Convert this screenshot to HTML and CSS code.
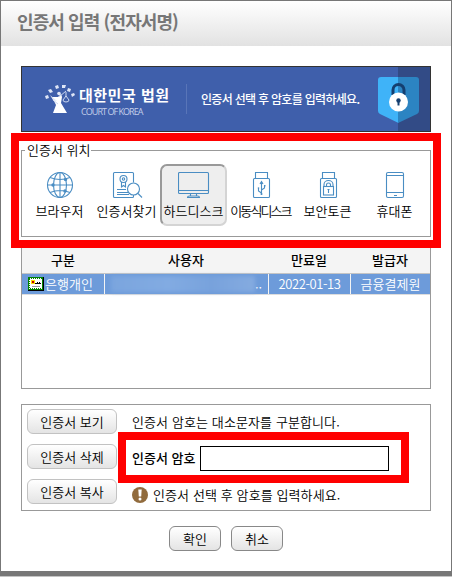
FILE: index.html
```html
<!DOCTYPE html>
<html lang="ko">
<head>
    <meta charset="UTF-8">
    <meta name="viewport" content="width=device-width, initial-scale=1.0">
    <title>인증서 입력 (전자서명)</title>
    <link rel="stylesheet" href="styles.css">
</head>
<body>
    <div class="dialog">
        <h1 class="titulo">인증서 입력 (전자서명)</h1>

        <div class="content">
            <div class="banner">
                <svg class="emblem" width="32" height="30" viewBox="0 0 32 30">
                    <g fill="#dfe6f6">
                        <path d="M1 12l3-1 1 3-3 1zM4 6l3-1 2 3-3 1zM11 2l3-1 1 3-3 1zM18 1l4 0-1 3-3 0zM24 4l3 1-1 3-3-1zM27 10l3-1 1 2-3 2z"/>
                        <path d="M8 13l6 0 3-3 1 3-1 6 6 10-14 0 3-8z" fill="#fff"/>
                        <path d="M6 11l3 5 4 1z"/>
                    </g>
                    <circle cx="15" cy="9.500" r="1.800" fill="#dfe6f6"/>
                    <path d="M15 13l7-6M22 8v5M19 16l3-4 3 4a3 2 0 0 1-6 0M9 16l5 4" fill="none" stroke="#cdd8f0"/>
                </svg>
                <div class="court">
                    <div class="court-name">대한민국 법원</div>
                    <div class="court-en">COURT OF KOREA</div>
                </div>
                <div class="slogan">인증서 선택 후 암호를 입력하세요.</div>
                <div class="shield">
                    <svg width="41" height="46" viewBox="0 0 41 46">
                        <path d="M3 0H20.500V46L2 37Q0 36 0 34V3Q0 0 3 0z" fill="#3fb3f8"/>
                        <path d="M20 0H38Q41 0 41 3V34Q41 36 39 37L20 46z" fill="#2c84c2"/>
                        <path d="M15 18V13a5.500 5.500 0 0 1 11 0v5" fill="none" stroke="#153f70" stroke-width="3"/>
                        <circle cx="20.500" cy="25" r="9.500" fill="#fff"/>
                        <circle cx="20.500" cy="23.500" r="2.200" fill="#153f70"/>
                        <path d="M19.500 24h2v4.500h-2z" fill="#153f70"/>
                    </svg>
                </div>
            </div>

            <fieldset class="places">
                <legend>인증서 위치</legend>
                <button class="place">
                    <svg width="32" height="28" viewBox="0 0 32 28">
                        <circle cx="16" cy="14" r="12.500"/>
                        <ellipse cx="16" cy="14" rx="6.500" ry="12.500"/>
                        <path d="M16 1.500v25M3.500 14h25M6 6.500q10 4 20 0M6 21.500q10-4 20 0"/>
                        <g class="dot"><circle cx="21.500" cy="8.500" r="1.700"/><circle cx="9" cy="14" r="1.700"/><circle cx="21" cy="20" r="1.700"/></g>
                    </svg>
                    <span>브라우저</span>
                </button>
                <button class="place">
                    <svg width="32" height="28" viewBox="0 0 32 28">
                        <path d="M22.500 11.500v-9q0-1-1-1h-18q-1 0-1 1v23q0 1 1 1h18q1 0 1-1v-1.500"/>
                        <circle cx="12.500" cy="8" r="3.500"/>
                        <circle cx="12.500" cy="8" r="1.200"/>
                        <path d="M10.500 11v5l2-1.500 2 1.500v-5M6 18.500h9M6 21.500h11M6 23.500h12"/>
                        <circle cx="22.500" cy="18" r="6"/>
                        <path d="M27 22.500l4 4"/>
                    </svg>
                    <span>인증서찾기</span>
                </button>
                <button class="place selected">
                    <svg width="32" height="28" viewBox="0 0 32 28">
                        <rect x=".500" y="1.500" width="30" height="21" rx="1"/>
                        <path d="M1 19.500h29M12.500 22.500v2.500h6v-2.500M9.500 26.500q0-1.500 2-1.500h8q2 0 2 1.500z"/>
                    </svg>
                    <span>하드디스크</span>
                </button>
                <button class="place">
                    <svg width="32" height="28" viewBox="0 0 32 28">
                        <path d="M10.500 7.500v-6h12v6"/>
                        <rect x="8.500" y="7.500" width="16" height="19" rx="1"/>
                        <path d="M16.500 24V11M15 13l1.500-2.500L18 13M16.500 22l-3-2v-3M16.500 19l3-2v-2"/>
                        <g class="dot"><circle cx="16.500" cy="23" r="1"/><circle cx="13.500" cy="17" r=".800"/><path d="M19 14h1.500v1.500H19z"/></g>
                    </svg>
                    <span class="narrow">이동식디스크</span>
                </button>
                <button class="place">
                    <svg width="32" height="28" viewBox="0 0 32 28">
                        <path d="M10.500 7.500v-6h12v6"/>
                        <rect x="8.500" y="7.500" width="16" height="19" rx="1"/>
                        <path d="M12 15.500v-2a4.500 4 0 0 1 9 0v2M14.500 15.500v-1.500a2 2 0 0 1 4 0v1.500"/>
                        <rect x="11.500" y="15.500" width="10" height="8.500"/>
                        <path d="M16.500 18v4M15.500 18.500h2"/>
                    </svg>
                    <span>보안토큰</span>
                </button>
                <button class="place">
                    <svg width="32" height="28" viewBox="0 0 32 28">
                        <rect x="7.500" y="1.500" width="17" height="25" rx="1.500"/>
                        <path d="M8 4.500h16M8 21.500h16M15 24.500h3"/>
                    </svg>
                    <span>휴대폰</span>
                </button>
            </fieldset>

            <div class="list">
                <div class="row head">
                    <div>구분</div><div>사용자</div><div>만료일</div><div>발급자</div>
                </div>
                <div class="row cert">
                    <div class="kind">
                        <svg width="16" height="14" viewBox="0 0 16 14" shape-rendering="crispEdges">
                            <path d="M0 0h16v14H0z" fill="#000"/>
                            <path d="M0 0h15v13H0z" fill="#008000"/>
                            <path d="M2 2h12v9H2z" fill="#fff"/>
                            <path d="M1.500 1.500h12v10h-12z" fill="none" stroke="#fff" stroke-dasharray="1 1"/>
                            <path d="M3 3h4v4H3z" fill="#ffde00"/>
                            <path d="M4 4h2v2H4z" fill="#c00000"/>
                            <path d="M7 6h2V5h1v1h1V5h1v1h1v1H7z" fill="#000"/>
                            <path d="M4 9h8v1H4z" fill="#999"/>
                        </svg>
                        <span>은행개인</span>
                    </div>
                    <div class="user"><span class="masked"></span><span>..</span></div>
                    <div class="date">2022-01-13</div>
                    <div>금융결제원</div>
                </div>
            </div>

            <div class="password">
                <div class="actions">
                    <button class="btn">인증서 보기</button>
                    <button class="btn">인증서 삭제</button>
                    <button class="btn">인증서 복사</button>
                </div>
                <div class="fields">
                    <p class="note">인증서 암호는 대소문자를 구분합니다.</p>
                    <div class="entry">
                        <label for="clave">인증서 암호</label>
                        <input type="password" id="clave" name="clave">
                    </div>
                    <p class="hint">
                        <svg width="16" height="16" viewBox="0 0 16 16">
                            <circle cx="8" cy="8" r="8" fill="#916b3d"/>
                            <path d="M6.300 2.500h3.400L9.200 9.500H6.800z" fill="#fff"/>
                            <circle cx="8" cy="12" r="1.500" fill="#fff"/>
                        </svg>
                        <span>인증서 선택 후 암호를 입력하세요.</span>
                    </p>
                </div>
            </div>

            <div class="buttons">
                <button class="btn dark">확인</button>
                <button class="btn dark">취소</button>
            </div>
        </div>

        <div class="mark mark-place"></div>
        <div class="mark mark-password"></div>
    </div>
</body>
</html>
```

FILE: styles.css
```css
* { box-sizing: border-box; }
body { margin: 0; background: #c4c4c4; font-family: "Noto Sans CJK KR", sans-serif; font-size: 13px; font-weight: 350; color: #000; overflow: hidden; }
button, input { font: inherit; color: inherit; }
.dialog { position: relative; height: 576px; background: #fff; border: 1px solid #777; border-bottom-width: 5px; }
.titulo {
    height: 45px;
    margin: 0;
    padding-left: 16px;
    background: linear-gradient(#fff, #e2e2e2);
    color: #777;
    font-size: 18px;
    line-height: 40px;
    letter-spacing: -0.9px;
}
.content { padding: 20px 20px 0; }

.banner {
    display: flex;
    align-items: center;
    height: 66px;
    border: 1px solid #333;
    background: linear-gradient(90deg, #3f5fab 376px, #324b86 376px);
    color: #fff;
}
.emblem { margin-left: 22px; }
.court { width: 107px; margin-left: 3px; padding-top: 2px; }
.court-name { font-size: 15px; font-weight: bold; line-height: 22px; letter-spacing: 0.5px; white-space: nowrap; }
.court-en { font: 9px/11px "Open Sans", sans-serif; letter-spacing: -0.95px; padding-left: 2px; color: #c3cee9; white-space: nowrap; }
.slogan { border-left: 1px solid #5975b8; height: 30px; line-height: 30px; padding-left: 14px; font-size: 12px; font-weight: 500; letter-spacing: -0.7px; white-space: nowrap; }
.shield { margin-left: auto; margin-right: 11px; height: 44px; }

.places {
    display: grid;
    grid-template-columns: repeat(6, 67px);
    height: 96px;
    margin: 9px 0 0;
    padding: 4px 0 0 4px;
    border: 1px solid #999;
}
.places legend { padding: 0 1px 0 2px; margin-left: -1px; height: 19px; line-height: 17px; }
.place {
    display: flex;
    flex-direction: column;
    align-items: center;
    height: 62px;
    padding: 5px 0 0;
    border: 2px solid transparent;
    border-radius: 7px;
    background: none;
}
.place svg { fill: none; stroke: #4a8dc3; stroke-width: 1.1; flex: none; }
.place .dot { fill: #4a8dc3; stroke: none; }
.place span { line-height: 18px; margin-top: 3px; white-space: nowrap; }
.place .narrow { letter-spacing: -1.9px; }
.selected { background: #eee; border-color: #999 #d4d4d4 #d4d4d4 #999; }

.list { height: 143px; margin-top: 9px; border: 1px solid #999; }
.row { display: grid; grid-template-columns: 82px 164px 82px 1fr; text-align: center; }
.head { height: 27px; line-height: 26px; background: #f4f4f4; border-bottom: 1px solid #c4c4c4; font-weight: 500; }
.cert { height: 21px; line-height: 20px; background: #6d9bda; color: #fff; border-bottom: 1px solid #ddd; }
.cert > div + div { border-left: 1px solid #f4f4f4; }
.kind { display: flex; align-items: center; padding-left: 6px; gap: 1px; }
.user { display: flex; align-items: center; justify-content: space-between; padding: 0 6px; }
.masked { width: 145px; height: 16px; background: linear-gradient(90deg, #7ba5de, #82abe2 40%, #78a2dc 70%, #85abe0); filter: blur(2px); }
.date { letter-spacing: -0.4px; }

.password { display: flex; height: 107px; margin-top: 15px; padding: 4px 5px; border: 1px solid #999; }
.actions { display: flex; flex-direction: column; gap: 10px; width: 90px; }
.btn {
    height: 25px;
    padding: 0;
    border: 1px solid #c2c2c2;
    border-radius: 6px;
    background: linear-gradient(#fff, #e4e4e4);
    line-height: 23px;
}
.fields { padding-left: 15px; }
.fields p { margin: 0; line-height: 25px; letter-spacing: 0.1px; }
.entry { display: flex; gap: 4px; height: 25px; margin: 12px 0 11px; line-height: 24px; font-weight: 500; }
.entry label { width: 64px; white-space: nowrap; }
.entry input { width: 189px; height: 25px; padding: 2px 4px; border: 1px solid #000; border-radius: 0; }
.hint { display: flex; align-items: center; gap: 5px; }

.buttons { display: flex; justify-content: center; gap: 10px; margin-top: 15px; }
.dark { width: 52px; border-color: #888; }

/* red highlight frames over the form */
.mark { position: absolute; border: 8px solid #f00; pointer-events: none; }
.mark-place { left: 10px; top: 132px; width: 430px; height: 115px; }
.mark-password { left: 117px; top: 431px; width: 291px; height: 51px; }
```
